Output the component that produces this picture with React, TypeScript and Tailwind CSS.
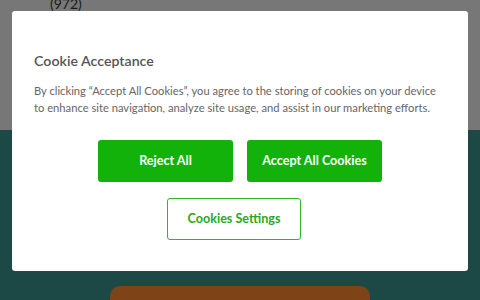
import React from 'react';

const App = () => {
  return (
    <div className="relative w-[480px] h-[300px] overflow-hidden font-['Lato',sans-serif]">
      {/* page behind the dialog, already dimmed */}
      <div className="h-[130px] bg-[#777777] pl-[50px] flex items-start">
        <span className="relative -top-[4px] text-[14px] leading-[16px] text-[#1a1a1a]">(972)</span>
      </div>
      <div className="h-[170px] bg-[#1c4946] flex justify-center pt-[156px]">
        <div className="w-[260px] h-[20px] rounded-t-[10px] bg-[#7e4317]" />
      </div>

      {/* cookie dialog */}
      <div className="absolute left-[12px] top-[11px] w-[456px] h-[260px] bg-white rounded-[3px] px-[22px] pt-[41px]">
        <h2 className="text-[14.2px] leading-[18px] font-semibold text-[#555555]">Cookie Acceptance</h2>
        <p className="mt-[12px] text-[11.2px] leading-[17px] text-[#666666]">
          By clicking “Accept All Cookies”, you agree to the storing of cookies on your device to enhance site navigation, analyze site usage, and assist in our marketing efforts.
        </p>
        <div className="mt-[24px] flex justify-center gap-[14px]">
          <button className="w-[135px] h-[42px] rounded-[3px] bg-[#12b20b] text-white text-[12.6px] font-bold">Reject All</button>
          <button className="w-[135px] h-[42px] rounded-[3px] bg-[#12b20b] text-white text-[12.6px] font-bold">Accept All Cookies</button>
        </div>
        <div className="mt-[16px] flex justify-center pr-[12px]">
          <button className="w-[134px] h-[42px] rounded-[3px] border border-[#2fb42a] bg-white text-[#2aa825] text-[12.6px] font-bold">Cookies Settings</button>
        </div>
      </div>
    </div>
  );
};

export default App;
